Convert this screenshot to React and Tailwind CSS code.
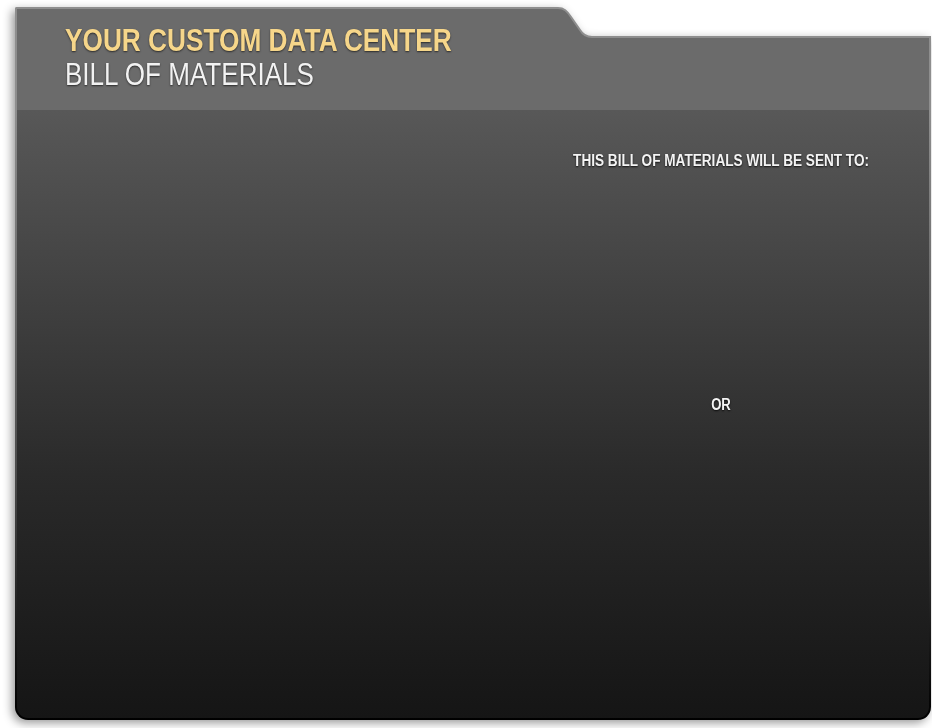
export default function App() {
  const sans = "font-['Liberation_Sans','Arial',sans-serif]";
  return (
    <div className={`w-[932px] h-[728px] bg-white pt-[7px] pl-[15px] pr-[1px] pb-[8px] ${sans}`}>
      <div className="flex flex-col h-full [filter:drop-shadow(-3px_3px_5px_rgba(0,0,0,0.4))]">
        {/* header band with tab */}
        <div className="flex h-[103px]">
          <div className="w-[535px] bg-[#6b6b6b] border-t-2 border-l-2 border-[#8e8e8e] rounded-tl-[2px] pl-[48px] pt-[15px]">
            <h1 className="block w-max origin-left scale-x-[0.82] whitespace-nowrap text-[32px] leading-none font-bold text-[#f6d68a] [text-shadow:0_1px_2px_rgba(0,0,0,0.6)]">
              YOUR CUSTOM DATA CENTER
            </h1>
            <h2 className="block w-max origin-left scale-x-[0.84] whitespace-nowrap mt-[3px] text-[31px] leading-none font-normal text-[#f2f2f2] [text-shadow:0_1px_2px_rgba(0,0,0,0.6)]">
              BILL OF MATERIALS
            </h2>
          </div>
          <div className="flex-1 flex flex-col">
            <div className="flex h-[31px]">
              <svg width="46" height="31" viewBox="0 0 46 31" className="block shrink-0">
                <path d="M0 1 H8 C14 1 17 4 21 10 L30 23 C33 28 36 30 42 30 H46 V31 H0 Z" fill="#6b6b6b" />
                <path d="M0 1 H8 C14 1 17 4 21 10 L30 23 C33 28 36 30 42 30 H46" fill="none" stroke="#8e8e8e" strokeWidth="2" />
              </svg>
              <div className="flex-1 border-b-2 border-[#8e8e8e]" />
            </div>
            <div className="flex-1 bg-[#6b6b6b] border-r-2 border-[#8e8e8e]" />
          </div>
        </div>

        {/* body */}
        <div className="flex-1 bg-[linear-gradient(to_bottom,#8e8e8e,#4a4a4a_60%,#000)] px-[2px] pb-[2px] rounded-b-[13px]">
          <div className="h-full rounded-b-[11px] bg-[linear-gradient(to_bottom,#585858,#2a2a2a_60%,#151515)] flex justify-end pr-[48px] pt-[43px]">
            <div className="w-[320px] flex flex-col items-center text-center text-[16px] leading-none font-bold text-[#f4f4f4] [text-shadow:0_1px_2px_rgba(0,0,0,0.8)]">
              <p className="w-max whitespace-nowrap scale-x-[0.85]">THIS BILL OF MATERIALS WILL BE SENT TO:</p>
              <p className="w-max whitespace-nowrap scale-x-[0.82] mt-[228px]">OR</p>
            </div>
          </div>
        </div>
      </div>
    </div>
  );
}
